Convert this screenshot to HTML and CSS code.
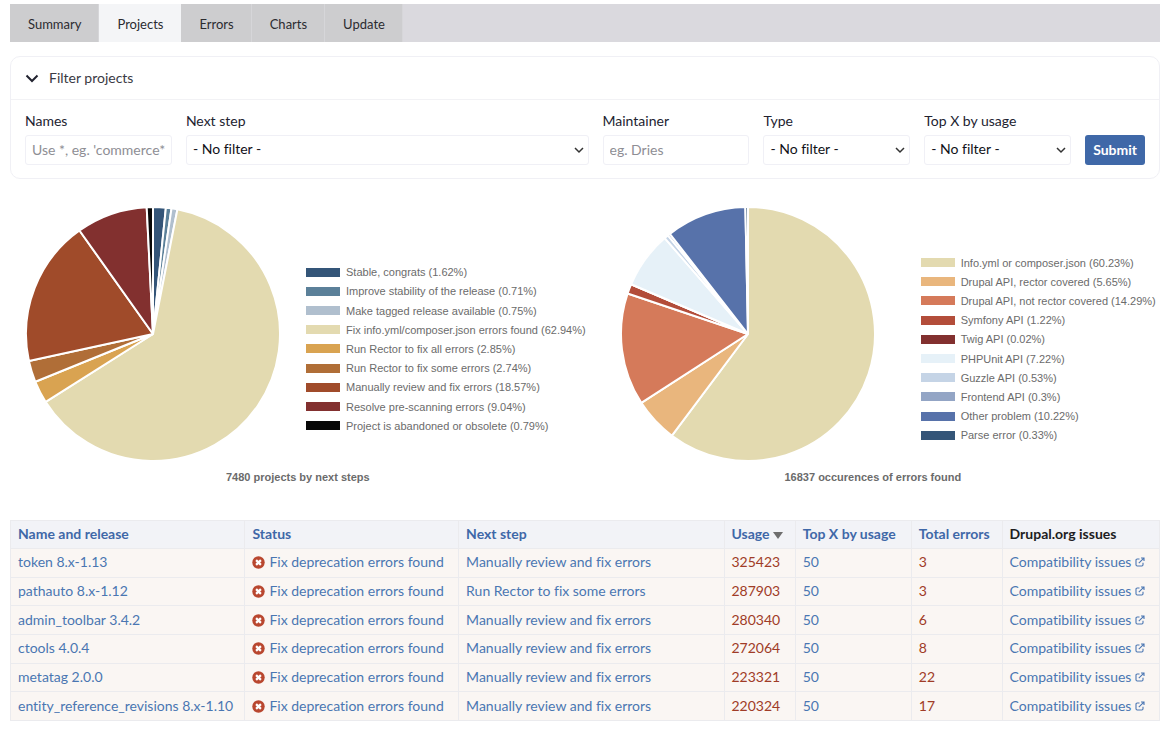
FILE: index.html
```html
<!DOCTYPE html>
<html lang="en">
<head>
<meta charset="utf-8">
<meta name="viewport" content="width=device-width, initial-scale=1">
<title>Projects</title>
<link rel="stylesheet" href="styles.css">
</head>
<body>
<svg class="sprite" aria-hidden="true">
  <symbol id="error" viewBox="0 0 13 13">
    <circle cx="6.5" cy="6.5" r="6.2" fill="#b9472f"/>
    <path d="M4.1 4.1l4.8 4.8M8.9 4.1L4.1 8.9" stroke="#fff" stroke-width="2.2"/>
  </symbol>
  <symbol id="external" viewBox="0 0 10 10">
    <path d="M4.5 2H2.2Q1 2 1 3.2v4.6Q1 9 2.2 9h4.6Q8 9 8 7.8V5.8M3.8 6.2L8.6 1.4M6 1h3v3" fill="none" stroke="#4a76b2" stroke-width="1.1"/>
  </symbol>
</svg>

<nav class="tabs" aria-label="Sections">
  <a class="tab" href="#summary">Summary</a>
  <a class="tab tab-active" href="#projects" aria-current="page">Projects</a>
  <a class="tab" href="#errors">Errors</a>
  <a class="tab" href="#charts">Charts</a>
  <a class="tab" href="#update">Update</a>
</nav>

<main>
  <details class="filter" open>
    <summary class="filter-title">
      <svg class="chevron" viewBox="0 0 14 14" aria-hidden="true"><path d="M1.5 4.5L7 10l5.5-5.5" fill="none" stroke="#222330" stroke-width="2"/></svg>
      Filter projects
    </summary>
    <form class="filter-form">
      <div class="field">
        <label for="names">Names</label>
        <input class="control" id="names" type="text" placeholder="Use *, eg. 'commerce*'">
      </div>
      <div class="field field-wide">
        <label for="next">Next step</label>
        <div class="select"><select class="control" id="next"><option>- No filter -</option></select><svg class="caret" viewBox="0 0 10 10" aria-hidden="true"><path d="M1 3l4 4 4-4" fill="none" stroke="#333" stroke-width="1.5"/></svg></div>
      </div>
      <div class="field">
        <label for="maintainer">Maintainer</label>
        <input class="control" id="maintainer" type="text" placeholder="eg. Dries">
      </div>
      <div class="field">
        <label for="type">Type</label>
        <div class="select"><select class="control" id="type"><option>- No filter -</option></select><svg class="caret" viewBox="0 0 10 10" aria-hidden="true"><path d="M1 3l4 4 4-4" fill="none" stroke="#333" stroke-width="1.5"/></svg></div>
      </div>
      <div class="field">
        <label for="top">Top X by usage</label>
        <div class="select"><select class="control" id="top"><option>- No filter -</option></select><svg class="caret" viewBox="0 0 10 10" aria-hidden="true"><path d="M1 3l4 4 4-4" fill="none" stroke="#333" stroke-width="1.5"/></svg></div>
      </div>
      <button class="submit" type="submit">Submit</button>
    </form>
  </details>

  <div class="charts">
    <figure class="chart">
      <div class="chart-body">
        <svg class="pie" viewBox="-127 -127 254 254" role="img" aria-label="Projects by next steps"></svg>
        <ul class="legend">
          <li class="c-navy" data-value="1.62">Stable, congrats (1.62%)</li>
          <li class="c-steel" data-value="0.71">Improve stability of the release (0.71%)</li>
          <li class="c-mist" data-value="0.75">Make tagged release available (0.75%)</li>
          <li class="c-sand" data-value="62.94">Fix info.yml/composer.json errors found (62.94%)</li>
          <li class="c-gold" data-value="2.85">Run Rector to fix all errors (2.85%)</li>
          <li class="c-ochre" data-value="2.74">Run Rector to fix some errors (2.74%)</li>
          <li class="c-rust" data-value="18.57">Manually review and fix errors (18.57%)</li>
          <li class="c-wine" data-value="9.04">Resolve pre-scanning errors (9.04%)</li>
          <li class="c-black" data-value="0.79">Project is abandoned or obsolete (0.79%)</li>
        </ul>
      </div>
      <figcaption>7480 projects by next steps</figcaption>
    </figure>
    <figure class="chart chart-errors">
      <div class="chart-body">
        <svg class="pie" viewBox="-127 -127 254 254" role="img" aria-label="Errors found"></svg>
        <ul class="legend">
          <li class="c-sand" data-value="60.23">Info.yml or composer.json (60.23%)</li>
          <li class="c-peach" data-value="5.65">Drupal API, rector covered (5.65%)</li>
          <li class="c-coral" data-value="14.29">Drupal API, not rector covered (14.29%)</li>
          <li class="c-brick" data-value="1.22">Symfony API (1.22%)</li>
          <li class="c-wine" data-value="0.02">Twig API (0.02%)</li>
          <li class="c-ice" data-value="7.22">PHPUnit API (7.22%)</li>
          <li class="c-sky" data-value="0.53">Guzzle API (0.53%)</li>
          <li class="c-slate" data-value="0.3">Frontend API (0.3%)</li>
          <li class="c-blue" data-value="10.22">Other problem (10.22%)</li>
          <li class="c-navy" data-value="0.33">Parse error (0.33%)</li>
        </ul>
      </div>
      <figcaption>16837 occurences of errors found</figcaption>
    </figure>
  </div>

  <table class="projects">
    <colgroup><col class="col-name"><col class="col-status"><col class="col-next"><col class="col-usage"><col class="col-top"><col class="col-total"><col></colgroup>
    <thead>
      <tr>
        <th scope="col"><a href="#name">Name and release</a></th>
        <th scope="col"><a href="#status">Status</a></th>
        <th scope="col"><a href="#next-step">Next step</a></th>
        <th scope="col" aria-sort="descending"><a href="#usage">Usage<span class="sort"></span></a></th>
        <th scope="col"><a href="#top-x">Top X by usage</a></th>
        <th scope="col"><a href="#total">Total errors</a></th>
        <th scope="col">Drupal.org issues</th>
      </tr>
    </thead>
    <tbody>
      <tr><td><a href="#token">token 8.x-1.13</a></td><td><svg class="error"><use href="#error"/></svg><a href="#s">Fix deprecation errors found</a></td><td><a href="#n">Manually review and fix errors</a></td><td class="count">325423</td><td><a href="#t">50</a></td><td class="count">3</td><td><a href="#i">Compatibility issues<svg class="external"><use href="#external"/></svg></a></td></tr>
      <tr><td><a href="#pathauto">pathauto 8.x-1.12</a></td><td><svg class="error"><use href="#error"/></svg><a href="#s">Fix deprecation errors found</a></td><td><a href="#n">Run Rector to fix some errors</a></td><td class="count">287903</td><td><a href="#t">50</a></td><td class="count">3</td><td><a href="#i">Compatibility issues<svg class="external"><use href="#external"/></svg></a></td></tr>
      <tr><td><a href="#admin">admin_toolbar 3.4.2</a></td><td><svg class="error"><use href="#error"/></svg><a href="#s">Fix deprecation errors found</a></td><td><a href="#n">Manually review and fix errors</a></td><td class="count">280340</td><td><a href="#t">50</a></td><td class="count">6</td><td><a href="#i">Compatibility issues<svg class="external"><use href="#external"/></svg></a></td></tr>
      <tr><td><a href="#ctools">ctools 4.0.4</a></td><td><svg class="error"><use href="#error"/></svg><a href="#s">Fix deprecation errors found</a></td><td><a href="#n">Manually review and fix errors</a></td><td class="count">272064</td><td><a href="#t">50</a></td><td class="count">8</td><td><a href="#i">Compatibility issues<svg class="external"><use href="#external"/></svg></a></td></tr>
      <tr><td><a href="#metatag">metatag 2.0.0</a></td><td><svg class="error"><use href="#error"/></svg><a href="#s">Fix deprecation errors found</a></td><td><a href="#n">Manually review and fix errors</a></td><td class="count">223321</td><td><a href="#t">50</a></td><td class="count">22</td><td><a href="#i">Compatibility issues<svg class="external"><use href="#external"/></svg></a></td></tr>
      <tr><td><a href="#err">entity_reference_revisions 8.x-1.10</a></td><td><svg class="error"><use href="#error"/></svg><a href="#s">Fix deprecation errors found</a></td><td><a href="#n">Manually review and fix errors</a></td><td class="count">220324</td><td><a href="#t">50</a></td><td class="count">17</td><td><a href="#i">Compatibility issues<svg class="external"><use href="#external"/></svg></a></td></tr>
    </tbody>
  </table>
</main>
<script src="charts.js"></script>
</body>
</html>
```
FILE: styles.css
```css
* { box-sizing: border-box; }

body {
  margin: 4px 12px 16px 10px;
  background: #fff;
  color: #222330;
  font: 14px/20px Lato, "Open Sans", sans-serif;
  font-variant-ligatures: none;
}

a { color: #4a76b2; text-decoration: none; }

.sprite { display: none; }

.tabs { display: flex; background: #dad9de; font-size: 13px; }
.tab {
  padding: 10px 18px 8px;
  background: #cdcdcf;
  box-shadow: inset -1px 0 #d6d6d9;
  color: #2b2b30;
}
.tab-active { background: #f4f5f7; box-shadow: none; }

.filter {
  margin-top: 14px;
  border: 1px solid #f0f0f5;
  border-radius: 10px;
}
.filter-title {
  display: flex;
  align-items: center;
  gap: 10px;
  padding: 11px 14px;
  border-bottom: 1px solid #f2f2f5;
  color: #3a3a44;
  list-style: none;
}
.chevron { width: 14px; height: 14px; }
.filter-form {
  display: flex;
  align-items: flex-end;
  gap: 14px;
  padding: 11px 14px 13px;
}
.field { flex: 147 1 0; min-width: 0; }
.field-wide { flex-grow: 403; }
.field label { display: block; margin-bottom: 4px; }
.select { position: relative; }
.control {
  display: block;
  width: 100%;
  height: 30px;
  padding: 0 6px 2px;
  border: 1px solid #f0f0f6;
  border-radius: 3px;
  background: #fff;
  color: #111118;
  font: inherit;
  appearance: none;
}
.control::placeholder { color: #8e8e94; }
.caret {
  position: absolute;
  top: 10px;
  right: 5px;
  width: 10px;
  height: 10px;
  pointer-events: none;
}
.submit {
  flex: none;
  height: 30px;
  padding: 0 8px;
  border: 0;
  border-radius: 3px;
  background: #3f68a8;
  color: #fff;
  font: inherit;
  font-weight: 700;
}

.charts {
  display: grid;
  grid-template-columns: 1fr 1fr;
  margin-top: 28px;
  font: 11px/18px "Liberation Sans", Arial, sans-serif;
  color: #6b6b6b;
}
.chart { margin: 0; }
.chart-body { display: flex; align-items: center; gap: 26px; padding-left: 16px; }
.chart-errors .chart-body { gap: 46px; padding-left: 35px; }
.pie { flex: none; width: 254px; height: 254px; }
.legend {
  display: grid;
  grid-auto-rows: 1fr;
  height: 173px;
  margin: 30px 0 0;
  padding: 0;
  list-style: none;
}
.chart-errors .legend { height: 192px; }
.legend li { display: flex; align-items: center; gap: 6px; white-space: nowrap; }
.legend li::before { content: ""; width: 34px; height: 9px; background: var(--color); }
figcaption { margin-top: 7px; text-align: center; font-weight: 700; }

.c-navy { --color: #345578; }
.c-steel { --color: #5b8099; }
.c-mist { --color: #b0bfce; }
.c-sand { --color: #e3dab0; }
.c-gold { --color: #d9a351; }
.c-ochre { --color: #b06e37; }
.c-rust { --color: #a04b2a; }
.c-wine { --color: #82302f; }
.c-black { --color: #080808; }
.c-peach { --color: #e9b67d; }
.c-coral { --color: #d57a5a; }
.c-brick { --color: #b34d3a; }
.c-ice { --color: #e6f1f8; }
.c-sky { --color: #c5d4e6; }
.c-slate { --color: #93a5c5; }
.c-blue { --color: #5772aa; }

.slice { fill: var(--color); stroke: #fff; stroke-width: 2; stroke-linejoin: bevel; }

.projects {
  width: 100%;
  height: 201px;
  margin-top: 34px;
  border-collapse: collapse;
  table-layout: fixed;
}
.col-name { width: 20.4%; }
.col-status { width: 18.6%; }
.col-next { width: 23.1%; }
.col-usage { width: 6.2%; }
.col-top { width: 10.1%; }
.col-total { width: 7.9%; }
.projects th, .projects td {
  padding: 3px 7px 4px;
  border: 1px solid #ebebee;
  text-align: left;
  white-space: nowrap;
}
.projects th { background: #f2f3f7; color: #1d1d22; }
.projects th a { color: #3f68a8; }
.projects td { background: #faf6f3; }
.projects .count { color: #a03c27; }
.sort {
  display: inline-block;
  margin-left: 3px;
  border: 5px solid transparent;
  border-top: 7px solid #6e6e6e;
  border-bottom: 0;
}
.error { width: 13px; height: 13px; margin-right: 4px; vertical-align: -2px; }
.external { width: 10px; height: 10px; margin-left: 4px; }
```
FILE: charts.js
```js
// Draws each pie from the values listed in the legend beside it.
const RADIUS = 127;

function point(share) {
  const angle = share * 2 * Math.PI;
  return `${(RADIUS * Math.sin(angle)).toFixed(2)} ${(-RADIUS * Math.cos(angle)).toFixed(2)}`;
}

document.querySelectorAll('.chart-body').forEach((body) => {
  const pie = body.querySelector('.pie');
  const items = [...body.querySelectorAll('.legend li')];
  const total = items.reduce((sum, item) => sum + Number(item.dataset.value), 0);
  let start = 0;
  items.forEach((item) => {
    const share = Number(item.dataset.value) / total;
    const large = share > 0.5 ? 1 : 0;
    const slice = document.createElementNS('http://www.w3.org/2000/svg', 'path');
    slice.setAttribute('class', `slice ${item.className}`);
    slice.setAttribute('d', `M0 0L${point(start)}A${RADIUS} ${RADIUS} 0 ${large} 1 ${point(start + share)}Z`);
    pie.append(slice);
    start += share;
  });
});
```
